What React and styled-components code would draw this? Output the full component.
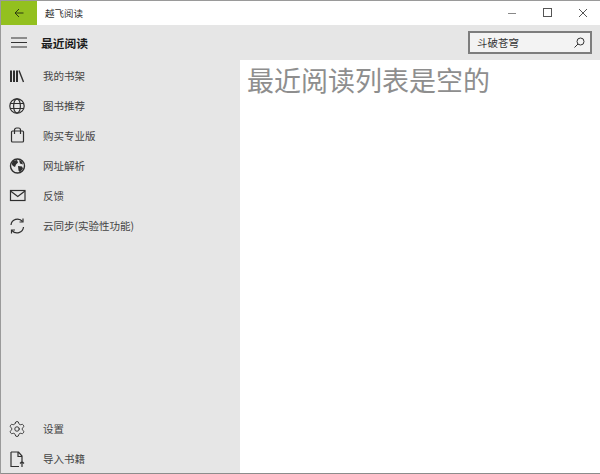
import React from "react";
import styled, { createGlobalStyle } from "styled-components";
import { Settings } from "lucide-react";

const Global = createGlobalStyle`
  html, body { margin: 0; padding: 0; background: #fff; }
  * { box-sizing: border-box; }
  #root { font-family: "Noto Sans CJK SC", "Liberation Sans", sans-serif; }
`;

const Win = styled.div`
  width: 600px; height: 474px; display: flex; flex-direction: column; position: relative;
  border-top: 1px solid #9a9a9a; border-left: 1px solid #9a9a9a;
  overflow: hidden; background: #fff;
  &::after { content: ""; position: absolute; left: 0; right: 0; bottom: 0; height: 1px; background: #8c8c8c; }
`;
const TitleBar = styled.div`
  height: 24px; flex: none; display: flex; align-items: center; background: #fff;
`;
const Back = styled.div`
  width: 36px; height: 24px; background: #93c01f; display: flex; align-items: center; justify-content: center; color: #2c3a10;
`;
const AppName = styled.div`
  margin-left: 8px; font-size: 9.5px; color: #333; flex: 1; line-height: 24px;
`;
const WinButtons = styled.div`
  display: flex; align-items: center; height: 24px;
`;
const WinBtn = styled.div`
  width: 35px; height: 24px; display: flex; align-items: center; justify-content: center; color: ${p => p.$soft ? "#888" : "#555"};
`;
const Header = styled.div`
  height: 35px; flex: none; background: #e6e6e6; display: flex; align-items: center;
`;
const Burger = styled.div`
  width: 40px; display: flex; justify-content: center; padding-right: 4px; color: #333;
`;
const Heading = styled.div`
  font-size: 11.75px; font-weight: 700; color: #1c1c1c; flex: 1; line-height: 35px;
`;
const Search = styled.div`
  width: 124px; height: 23px; margin-right: 8px; border: 2px solid #7d7d7d; background: #f3f3f3;
  display: flex; align-items: center; justify-content: space-between; padding: 0 5px 0 7px;
  font-size: 10.5px; color: #333;
`;
const Body = styled.div`
  flex: 1; display: flex; min-height: 0;
`;
const Side = styled.div`
  width: 239px; flex: none; background: #e6e6e6; display: flex; flex-direction: column; justify-content: space-between; padding-top: 1px;
`;
const Group = styled.div`
  display: flex; flex-direction: column;
`;
const Row = styled.div`
  height: 30px; display: flex; align-items: center; color: #333;
`;
const IconBox = styled.div`
  width: 42px; padding-left: 7px; flex: none; display: flex; justify-content: flex-start; color: #2f2f2f;
`;
const Label = styled.div`
  font-size: 10.5px; color: #444; line-height: 30px; white-space: nowrap;
`;
const Main = styled.div`
  flex: 1; background: #fff; padding-left: 7px;
`;
const Empty = styled.div`
  font-size: 27px; font-weight: 400; line-height: 40px; color: #8e8e8e; white-space: nowrap;
`;

const I = ({ children, sw = 1.2 }) => (
  <svg width={18} height={18} viewBox="0 0 18 18" fill="none" stroke="currentColor" strokeWidth={sw}>{children}</svg>
);

const items = [
  ["我的书架", <I key="a"><path d="M3 3.500v11.500M6 3.500v11.500M9 3.500v11.500" strokeWidth="2" /><path d="M11 3.500l4.500 11.500" strokeWidth="1.400" /></I>],
  ["图书推荐", <I key="b"><circle cx="9" cy="9" r="7.200" /><ellipse cx="9" cy="9" rx="3.400" ry="7.200" /><path d="M2.200 6.500h13.600M2.200 11.500h13.600" /></I>],
  ["购买专业版", <I key="c"><rect x="3.500" y="4" width="12" height="11" rx="1" /><path d="M6.500 7V3a2 2 0 0 1 2-2h2a2 2 0 0 1 2 2v4" /></I>],
  ["网址解析", <I key="d"><circle cx="9.500" cy="9" r="7" strokeWidth="1.400" /><path fill="currentColor" stroke="none" d="M5 4l4-1 1 2.500-2 2-1 2.500-2-1-1.500-2zM10 9l4 .5 1 2-3 4-1.500-2zM11 3l3 1.500 1 3-3-1z" /></I>],
  ["反馈", <I key="e"><rect x="2.500" y="3.500" width="14.500" height="10" /><path d="M2.500 4L9.750 9.500 17 4" /></I>],
  ["云同步(实验性功能)", <I key="f"><path d="M3 8a6.500 6.500 0 0 1 11.500-3.500M15.500 10a6.500 6.500 0 0 1-11.500 3.500" /><path d="M15 1.500v3.500h-3.500M3.500 16.500V13H7" /></I>],
];

export default function App() {
  return (
    <Win>
      <Global />
      <TitleBar>
        <Back>
          <svg width="10" height="10" viewBox="0 0 10 10" fill="none" stroke="currentColor" strokeWidth="1"><path d="M9.500 5H1M5 1L1 5l4 4" /></svg>
        </Back>
        <AppName>越飞阅读</AppName>
        <WinButtons>
          <WinBtn $soft><svg width="10" height="10"><path d="M0 5.500h8" stroke="currentColor" /></svg></WinBtn>
          <WinBtn><svg width="10" height="10"><rect x=".5" y=".5" width="8" height="8" fill="none" stroke="currentColor" /></svg></WinBtn>
          <WinBtn><svg width="10" height="10"><path d="M1 1l8 8M9 1l-8 8" stroke="currentColor" /></svg></WinBtn>
        </WinButtons>
      </TitleBar>
      <Header>
        <Burger>
          <svg width="16" height="11" viewBox="0 0 16 11" stroke="currentColor" strokeWidth="1.100"><path d="M0 1h16M0 5.500h16M0 10h16" /></svg>
        </Burger>
        <Heading>最近阅读</Heading>
        <Search>
          斗破苍穹
          <svg width="11" height="11" viewBox="0 0 11 11" fill="none" stroke="#333" strokeWidth="1"><circle cx="6.500" cy="4.500" r="3.500" /><path d="M4 7l-3.500 3.500" /></svg>
        </Search>
      </Header>
      <Body>
        <Side>
          <Group>
            {items.map(([t, ic]) => (
              <Row key={t}><IconBox>{ic}</IconBox><Label>{t}</Label></Row>
            ))}
          </Group>
          <Group>
            <Row>
              <IconBox><Settings size={18} strokeWidth={1.250} /></IconBox>
              <Label>设置</Label>
            </Row>
            <Row>
              <IconBox><I><path d="M3 2h7.500l3.500 4v5M10 2v4.500h4M3 2v14.500h8" /><path d="M14 17v-5M12 13.500l2-2 2 2" /></I></IconBox>
              <Label>导入书籍</Label>
            </Row>
          </Group>
        </Side>
        <Main><Empty>最近阅读列表是空的</Empty></Main>
      </Body>
    </Win>
  );
}
